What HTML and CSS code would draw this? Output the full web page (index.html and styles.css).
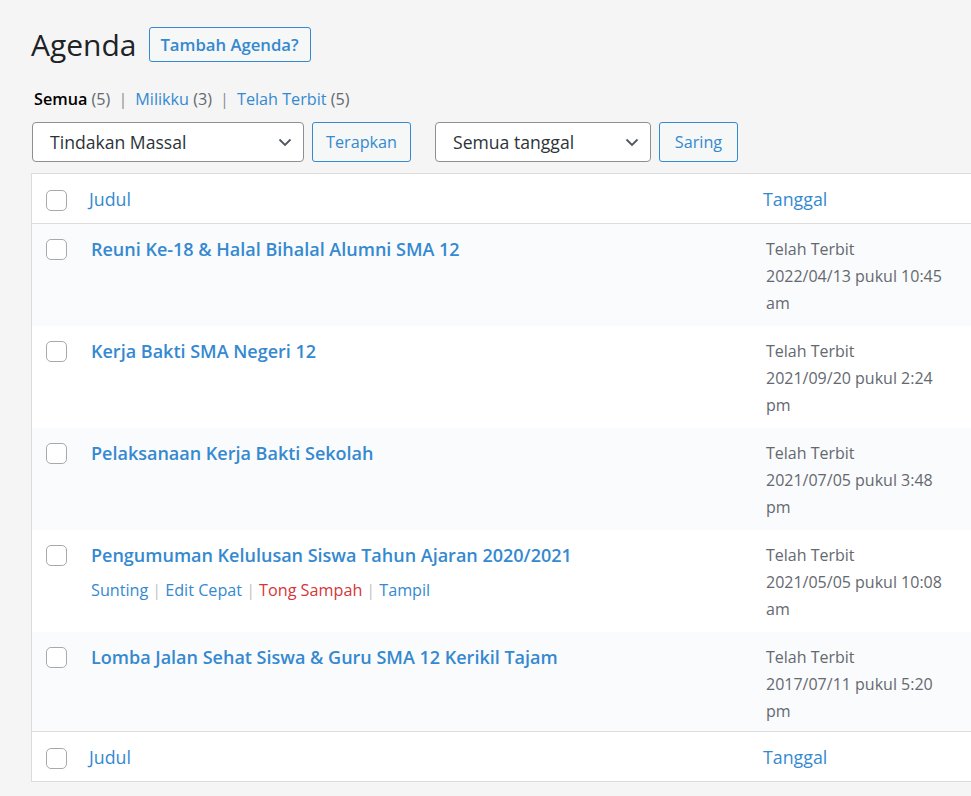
FILE: index.html
```html
<!DOCTYPE html>
<html lang="id">
<head>
<meta charset="utf-8">
<title>Agenda</title>
<link rel="stylesheet" href="styles.css">
</head>
<body>
<div class="wrap">
  <div class="heading">
    <h1 class="title">Agenda</h1>
    <a class="btn-add" href="#">Tambah Agenda?</a>
  </div>

  <ul class="subsubsub">
    <li><a class="current" href="#">Semua <span class="count">(5)</span></a><span class="sep">|</span></li>
    <li><a href="#">Milikku <span class="count">(3)</span></a><span class="sep">|</span></li>
    <li><a href="#">Telah Terbit <span class="count">(5)</span></a></li>
  </ul>

  <div class="tablenav">
    <div class="select select-bulk"><span>Tindakan Massal</span>
      <svg class="chev" width="16" height="16" viewBox="0 0 16 16"><path d="M2.5 5.5 L8 11 L13.5 5.5" fill="none" stroke="#50575e" stroke-width="1.8"/></svg>
    </div>
    <button class="btn btn-apply">Terapkan</button>
    <div class="select select-date"><span>Semua tanggal</span>
      <svg class="chev" width="16" height="16" viewBox="0 0 16 16"><path d="M2.5 5.5 L8 11 L13.5 5.5" fill="none" stroke="#50575e" stroke-width="1.8"/></svg>
    </div>
    <button class="btn btn-filter">Saring</button>
  </div>

  <table class="list">
    <thead>
      <tr>
        <th class="col-cb"><span class="cb"></span></th>
        <th class="col-title"><a href="#">Judul</a></th>
        <th class="col-date"><a href="#">Tanggal</a></th>
      </tr>
    </thead>
    <tbody>
      <tr class="alt">
        <td class="col-cb"><span class="cb"></span></td>
        <td class="col-title"><a class="row-title" href="#">Reuni Ke-18 &amp; Halal Bihalal Alumni SMA 12</a></td>
        <td class="col-date"><div class="date-text">Telah Terbit<br>2022/04/13 pukul 10:45 am</div></td>
      </tr>
      <tr>
        <td class="col-cb"><span class="cb"></span></td>
        <td class="col-title"><a class="row-title" href="#">Kerja Bakti SMA Negeri 12</a></td>
        <td class="col-date"><div class="date-text">Telah Terbit<br>2021/09/20 pukul 2:24 pm</div></td>
      </tr>
      <tr class="alt">
        <td class="col-cb"><span class="cb"></span></td>
        <td class="col-title"><a class="row-title" href="#">Pelaksanaan Kerja Bakti Sekolah</a></td>
        <td class="col-date"><div class="date-text">Telah Terbit<br>2021/07/05 pukul 3:48 pm</div></td>
      </tr>
      <tr>
        <td class="col-cb"><span class="cb"></span></td>
        <td class="col-title"><a class="row-title" href="#">Pengumuman Kelulusan Siswa Tahun Ajaran 2020/2021</a>
          <div class="row-actions"><a href="#">Sunting</a><span class="sep">|</span><a href="#">Edit Cepat</a><span class="sep">|</span><a class="trash" href="#">Tong Sampah</a><span class="sep">|</span><a href="#">Tampil</a></div>
        </td>
        <td class="col-date"><div class="date-text">Telah Terbit<br>2021/05/05 pukul 10:08 am</div></td>
      </tr>
      <tr class="alt last">
        <td class="col-cb"><span class="cb"></span></td>
        <td class="col-title"><a class="row-title" href="#">Lomba Jalan Sehat Siswa &amp; Guru SMA 12 Kerikil Tajam</a></td>
        <td class="col-date"><div class="date-text">Telah Terbit<br>2017/07/11 pukul 5:20 pm</div></td>
      </tr>
    </tbody>
    <tfoot>
      <tr>
        <th class="col-cb"><span class="cb"></span></th>
        <th class="col-title"><a href="#">Judul</a></th>
        <th class="col-date"><a href="#">Tanggal</a></th>
      </tr>
    </tfoot>
  </table>
</div>
</body>
</html>
```

FILE: styles.css
```css
html, body {
  margin: 0;
  padding: 0;
  overflow: hidden;
}
body {
  background: #f5f5f5;
  font-family: "Open Sans", "Noto Sans", sans-serif;
  font-size: 16px;
  color: #3c434a;
}
a { text-decoration: none; color: #3489d0; }

.wrap {
  padding: 27px 0 0 31px;
  width: 1000px;
}

.heading {
  display: flex;
  align-items: center;
  gap: 12px;
  height: 35px;
}
.title {
  margin: 0;
  font-size: 30px;
  font-weight: 400;
  color: #1d2327;
  line-height: 35px;
}
.btn-add {
  box-sizing: border-box;
  display: inline-flex;
  align-items: center;
  justify-content: center;
  width: 162px;
  height: 35px;
  border: 1px solid #3489d0;
  border-radius: 3px;
  background: #f6f7f7;
  font-size: 16.7px;
  font-weight: 600;
}

.subsubsub {
  list-style: none;
  margin: 23px 0 0 3px;
  padding: 0;
  display: flex;
  line-height: 28px;
  font-size: 16.2px;
}
.subsubsub .current { color: #000; font-weight: 600; }
.subsubsub .count { color: #646970; font-weight: 400; }
.subsubsub .sep { color: #8c8f94; margin: 0 8px; }

.tablenav {
  display: flex;
  align-items: center;
  margin-top: 9px;
  height: 40px;
}
.select {
  box-sizing: border-box;
  height: 40px;
  border: 1px solid #8c8f94;
  border-radius: 4px;
  background: #fff;
  display: flex;
  align-items: center;
  justify-content: space-between;
  padding: 0 10px 0 17px;
  font-size: 17.6px;
  color: #2c3338;
}
.select-bulk { width: 272px; margin-left: 1px; }
.select-date { width: 216px; margin-left: 24px; }
.chev { flex: none; }
.btn {
  box-sizing: border-box;
  height: 40px;
  margin-left: 8px;
  padding: 0;
  border: 1px solid #3489d0;
  border-radius: 3px;
  background: #f6f7f7;
  color: #3489d0;
  font-family: inherit;
  font-size: 16.2px;
}
.btn-apply { width: 99px; }
.btn-filter { width: 79px; }

.list {
  margin-top: 11px;
  width: 960px;
  table-layout: fixed;
  border-collapse: collapse;
  border: 1px solid #dcdcde;
  background: #fff;
}
.list th {
  text-align: left;
  font-weight: 400;
  height: 49px;
  padding: 0;
  font-size: 17.8px;
}
.list thead th { border-bottom: 1px solid #dcdcde; }
.list tfoot th { border-top: 1px solid #dcdcde; }
.list td {
  vertical-align: top;
  padding: 12px 0 9px;
  line-height: 27px;
  font-size: 16px;
}
.list tr.last td { padding-bottom: 6px; }
.list tr.alt td { background: #fafbfc; }

.col-cb { width: 57px; }
.list th.col-cb .cb { margin: 3px 0 0 14px; }
.list td.col-cb .cb { margin: 3px 0 0 14px; }
.list th.col-title { padding-left: 0; }
.list td.col-title { padding-left: 2px; }
.col-date { width: 227px; }
.list th.col-date { padding-left: 13px; }
.list td.col-date { color: #646970; padding-left: 16px; padding-right: 0; }
.date-text { width: 192px; }

.cb {
  display: block;
  box-sizing: border-box;
  width: 21px;
  height: 21px;
  border: 1px solid #a7aaad;
  border-radius: 5px;
  background: #fff;
}

.row-title {
  font-weight: 600;
  font-size: 18px;
}
.row-actions {
  margin-top: 7px;
  font-size: 16.2px;
}
.row-actions .sep { color: #c3c4c7; margin: 0 4px; }
.row-actions .trash { color: #d63638; }
```
